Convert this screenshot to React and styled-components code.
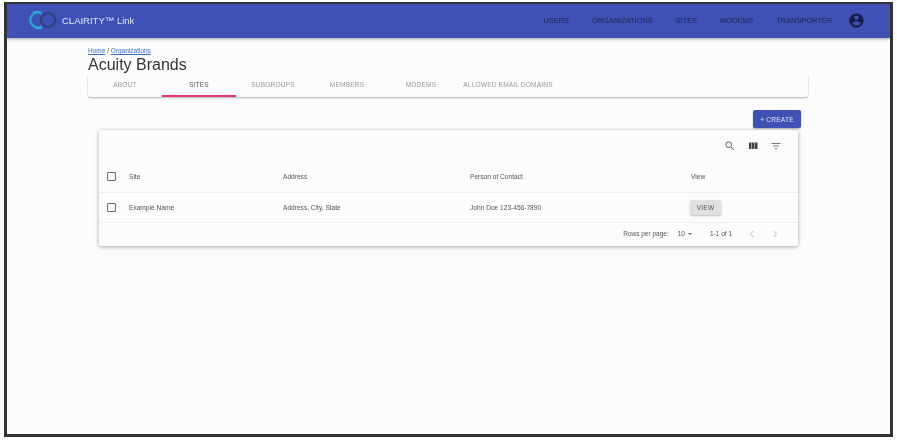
import React from "react";
import styled, { createGlobalStyle } from "styled-components";

const Global = createGlobalStyle`
  html, body { margin: 0; padding: 0; background: #fff; }
  body { font-family: "Liberation Sans", Arial, sans-serif; }
  * { box-sizing: border-box; }
`;

const Frame = styled.div`
  margin: 2px 0 0 4px;
  width: 889px;
  height: 435px;
  border: 3px solid #333;
  border-top-width: 2px;
  background: #fcfcfc;
  overflow: hidden;
  display: flex;
  flex-direction: column;
  filter: blur(0.35px);
`;

const AppBar = styled.header`
  height: 34px;
  flex: none;
  background: #3f51b5;
  box-shadow: 0 1px 3px rgba(0, 0, 0, 0.35);
  display: flex;
  align-items: center;
  padding: 0 25px 2px 20px;
`;

const Brand = styled.div`
  display: flex;
  align-items: center;
  gap: 5px;
  color: #e3e6f5;
  font-size: 9.5px;
`;

const Nav = styled.nav`
  margin-left: auto;
  display: flex;
  align-items: center;
  gap: 23px;
`;

const NavItem = styled.span`
  font-size: 7.4px;
  color: #1a2350;
  text-transform: uppercase;
`;

const Account = styled.svg`
  width: 17px;
  height: 17px;
  margin-left: -7px;
  fill: #151c45;
`;

const Main = styled.main`
  flex: 1;
  padding: 9px 82px 0 81px;
`;

const Crumbs = styled.div`
  font-size: 6.5px;
  line-height: 8px;
  color: #666;
`;

const CrumbLink = styled.a`
  color: #3a6fc4;
  text-decoration: underline;
`;

const Title = styled.h1`
  margin: 0;
  font-weight: 400;
  font-size: 16px;
  line-height: 19px;
  color: #333;
`;

const TabBar = styled.div`
  height: 23px;
  display: flex;
  background: #fcfcfc;
  border-radius: 2px;
  box-shadow: 0 1px 2px rgba(0, 0, 0, 0.3);
`;

const Tab = styled.div`
  width: ${(p) => p.$w || 74}px;
  flex: none;
  display: flex;
  align-items: center;
  justify-content: center;
  font-size: 6.6px;
  letter-spacing: 0.15px;
  text-transform: uppercase;
  color: ${(p) => (p.$active ? "#555" : "#999")};
  border-bottom: 2px solid ${(p) => (p.$active ? "#e0356f" : "transparent")};
`;

const Actions = styled.div`
  display: flex;
  justify-content: flex-end;
  padding: 13px 7px 2px 0;
`;

const CreateButton = styled.button`
  width: 48px;
  height: 18px;
  padding: 0;
  border: 0;
  border-radius: 2px;
  background: #3f51b5;
  color: #dfe3f5;
  font: inherit;
  font-size: 6.6px;
  letter-spacing: 0.2px;
  box-shadow: 0 1px 2px rgba(0, 0, 0, 0.3);
`;

const Card = styled.section`
  margin: 0 10px 0 11px;
  background: #fcfcfc;
  border-radius: 2px;
  box-shadow: 0 1px 4px rgba(0, 0, 0, 0.35);
`;

const Toolbar = styled.div`
  height: 36px;
  display: flex;
  align-items: center;
  justify-content: flex-end;
  gap: 10px;
  padding: 0 16px 5px 0;
`;

const ToolIcon = styled.svg`
  width: 12px;
  height: 12px;
  margin-left: ${(p) => p.$gap || 0}px;
  fill: ${(p) => p.$fill || "#777"};
`;

const Row = styled.div`
  display: grid;
  grid-template-columns: 30px 154px 187px 221px 1fr;
  align-items: center;
  height: ${(p) => p.$h}px;
  padding-bottom: ${(p) => p.$pb || 0}px;
  border-bottom: 1px solid #eee;
  font-size: 6.6px;
  color: #555;
`;

const Check = styled.span`
  display: block;
  margin-left: 8px;
  width: 9px;
  height: 9px;
  border: 1px solid #666;
  border-radius: 1px;
`;

const ViewButton = styled.button`
  display: block;
  width: 31px;
  height: 15px;
  margin-left: -1px;
  padding: 0;
  border: 0;
  border-radius: 2px;
  background: #e0e0e0;
  color: #555;
  font: inherit;
  font-size: 6.6px;
  letter-spacing: 0.2px;
  box-shadow: 0 1px 2px rgba(0, 0, 0, 0.25);
`;

const Footer = styled.div`
  height: 23px;
  display: flex;
  align-items: center;
  justify-content: flex-end;
  padding: 0 18px 2px 0;
  font-size: 6.5px;
  color: #555;
`;

const RowsSelect = styled.span`
  display: inline-flex;
  align-items: center;
  gap: 1px;
  margin: 0 18px 0 9px;
`;

const Caret = styled.span`
  width: 0;
  height: 0;
  margin-left: 2px;
  border-left: 2.5px solid transparent;
  border-right: 2.5px solid transparent;
  border-top: 2.5px solid #666;
`;

const Pager = styled.svg`
  width: 10px;
  height: 10px;
  margin-left: ${(p) => p.$gap}px;
  fill: none;
  stroke: #bbb;
  stroke-width: 1;
`;

const Logo = () => (
  <svg width="30" height="20" viewBox="0 0 30 20" fill="none">
    <circle cx="21" cy="10" r="7" stroke="#2f4383" strokeWidth="2.6" />
    <path d="M15 3.6A7.6 7.6 0 1 0 15 16.4" stroke="#2a9fd0" strokeWidth="2.6" />
    <path d="M6 2.4l6-1M8 17.6l6 1" stroke="#38b3dc" strokeWidth="1.4" />
  </svg>
);

const navItems = ["Users", "Organizations", "Sites", "Modems", "Transporter"];
const tabs = [
  { label: "About" },
  { label: "Sites", active: true },
  { label: "Subgroups" },
  { label: "Members" },
  { label: "Modems" },
  { label: "Allowed Email Domains", w: 100 },
];

export default function App() {
  return (
    <>
      <Global />
      <Frame>
        <AppBar>
          <Brand>
            <Logo />
            <span>CLAIRITY™ Link</span>
          </Brand>
          <Nav>
            {navItems.map((n) => (
              <NavItem key={n}>{n}</NavItem>
            ))}
            <Account viewBox="0 0 24 24">
              <path d="M12 2C6.48 2 2 6.48 2 12s4.48 10 10 10 10-4.48 10-10S17.52 2 12 2zm0 3c1.66 0 3 1.34 3 3s-1.34 3-3 3-3-1.34-3-3 1.34-3 3-3zm0 14.2c-2.5 0-4.71-1.28-6-3.22.03-1.99 4-3.08 6-3.08 1.99 0 5.97 1.09 6 3.08-1.29 1.94-3.5 3.22-6 3.22z" />
            </Account>
          </Nav>
        </AppBar>
        <Main>
          <Crumbs>
            <CrumbLink>Home</CrumbLink> / <CrumbLink>Organizations</CrumbLink>
          </Crumbs>
          <Title>Acuity Brands</Title>
          <TabBar>
            {tabs.map((t) => (
              <Tab key={t.label} $active={t.active} $w={t.w}>
                {t.label}
              </Tab>
            ))}
          </TabBar>
          <Actions>
            <CreateButton>+ CREATE</CreateButton>
          </Actions>
          <Card>
            <Toolbar>
              <ToolIcon viewBox="0 0 24 24">
                <path d="M15.5 14h-.79l-.28-.27A6.47 6.47 0 0 0 16 9.5 6.5 6.5 0 1 0 9.5 16c1.61 0 3.09-.59 4.23-1.57l.27.28v.79l5 4.99L20.49 19l-4.99-5zm-6 0C7.01 14 5 11.99 5 9.5S7.01 5 9.5 5 14 7.01 14 9.5 11.99 14 9.5 14z" />
              </ToolIcon>
              <ToolIcon viewBox="0 0 24 24" $fill="#444" $gap={1}>
                <path d="M10 18h5V5h-5v13zm-6 0h5V5H4v13zM16 5v13h5V5h-5z" />
              </ToolIcon>
              <ToolIcon viewBox="0 0 24 24" $gap={1}>
                <path d="M10 18h4v-2h-4v2zM3 6v2h18V6H3zm3 7h12v-2H6v2z" />
              </ToolIcon>
            </Toolbar>
            <Row $h={27} $pb={5}>
              <Check />
              <span>Site</span>
              <span>Address</span>
              <span>Person of Contact</span>
              <span>View</span>
            </Row>
            <Row $h={30}>
              <Check />
              <span>Example Name</span>
              <span>Address, City, State</span>
              <span>John Doe 123-456-7890</span>
              <span>
                <ViewButton>VIEW</ViewButton>
              </span>
            </Row>
            <Footer>
              <span>Rows per page:</span>
              <RowsSelect>
                10 <Caret />
              </RowsSelect>
              <span>1-1 of 1</span>
              <Pager viewBox="0 0 10 10" $gap={15}>
                <path d="M6.5 2L3.5 5l3 3" />
              </Pager>
              <Pager viewBox="0 0 10 10" $gap={13}>
                <path d="M3.5 2l3 3-3 3" />
              </Pager>
            </Footer>
          </Card>
        </Main>
      </Frame>
    </>
  );
}
